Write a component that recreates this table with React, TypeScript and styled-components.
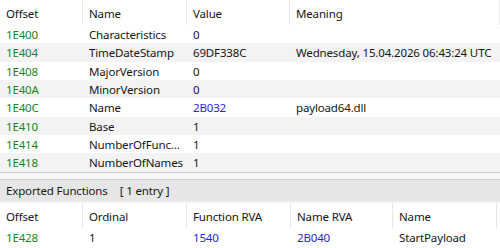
import React from 'react';
import styled, { createGlobalStyle } from 'styled-components';

const GlobalStyle = createGlobalStyle`
  html, body {
    margin: 0;
    padding: 0;
    background: #fff;
  }
  body {
    font-family: "Noto Sans", "Open Sans", sans-serif;
    font-size: 11.5px;
    letter-spacing: -0.15px;
    color: #161616;
  }
`;

type Tone = 'plain' | 'offset' | 'link';

const toneColor: Record<Tone, string> = {
  plain: '#161616',
  offset: '#18861c',
  link: '#2424e6'
};

const Frame = styled.div`
  width: 500px;
  height: 248px;
  overflow: hidden;
  display: flex;
  flex-direction: column;
  background: #fff;
`;

const Grid = styled.div`
  display: flex;
  flex-direction: column;
`;

const HeadRow = styled.div`
  display: flex;
  height: 25px;
  align-items: stretch;
  background: #fff;
`;

const HeadCell = styled.div<{ $w: number }>`
  flex: 0 0 ${(p) => p.$w}px;
  box-sizing: border-box;
  padding: 2px 5px 0 6px;
  display: flex;
  align-items: center;
  border-right: 1px solid #e6e6e6;
  white-space: nowrap;
  overflow: hidden;
`;

const Row = styled.div<{ $alt: boolean }>`
  display: flex;
  height: 18.33px;
  align-items: center;
  padding-top: 1px;
  box-sizing: border-box;
  background: ${(p) => (p.$alt ? '#f3f3f3' : '#fff')};
`;

const Cell = styled.div<{ $w: number; $tone: Tone }>`
  flex: 0 0 ${(p) => p.$w}px;
  box-sizing: border-box;
  padding: 0 4px 0 6px;
  color: ${(p) => toneColor[p.$tone]};
  white-space: nowrap;
  overflow: hidden;
  text-overflow: ellipsis;
`;

const Splitter = styled.div`
  height: 6px;
  border-top: 1px solid #cfcfcf;
  border-bottom: 1px solid #cfcfcf;
  background: #f7f7f7;
`;

const SectionBar = styled.div`
  height: 23px;
  display: flex;
  align-items: center;
  gap: 12px;
  padding: 1px 0 0 6px;
  box-sizing: border-box;
  background: #e6e6e6;
  border-bottom: 2px solid #f2f2f2;
`;

type Column = { title: string; width: number };
type Value = { text: string; tone?: Tone };

const headerCols: Column[] = [
  { title: 'Offset', width: 83 },
  { title: 'Name', width: 104 },
  { title: 'Value', width: 103 },
  { title: 'Meaning', width: 210 }
];

const headerRows: Value[][] = [
  [{ text: '1E400', tone: 'offset' }, { text: 'Characteristics' }, { text: '0' }, { text: '' }],
  [{ text: '1E404', tone: 'offset' }, { text: 'TimeDateStamp' }, { text: '69DF338C' }, { text: 'Wednesday, 15.04.2026 06:43:24 UTC' }],
  [{ text: '1E408', tone: 'offset' }, { text: 'MajorVersion' }, { text: '0' }, { text: '' }],
  [{ text: '1E40A', tone: 'offset' }, { text: 'MinorVersion' }, { text: '0' }, { text: '' }],
  [{ text: '1E40C', tone: 'offset' }, { text: 'Name' }, { text: '2B032', tone: 'link' }, { text: 'payload64.dll' }],
  [{ text: '1E410', tone: 'offset' }, { text: 'Base' }, { text: '1' }, { text: '' }],
  [{ text: '1E414', tone: 'offset' }, { text: 'NumberOfFunctions' }, { text: '1' }, { text: '' }],
  [{ text: '1E418', tone: 'offset' }, { text: 'NumberOfNames' }, { text: '1' }, { text: '' }]
];

const exportCols: Column[] = [
  { title: 'Offset', width: 83 },
  { title: 'Ordinal', width: 104 },
  { title: 'Function RVA', width: 104 },
  { title: 'Name RVA', width: 102 },
  { title: 'Name', width: 104 }
];

const exportRows: Value[][] = [
  [{ text: '1E428', tone: 'offset' }, { text: '1' }, { text: '1540', tone: 'link' }, { text: '2B040', tone: 'link' }, { text: 'StartPayload' }]
];

const DataGrid = ({ columns, rows }: { columns: Column[]; rows: Value[][] }) => (
  <Grid>
    <HeadRow>
      {columns.map((c) => (
        <HeadCell key={c.title} $w={c.width}>{c.title}</HeadCell>
      ))}
    </HeadRow>
    {rows.map((r, i) => (
      <Row key={i} $alt={i % 2 === 1}>
        {r.map((v, j) => (
          <Cell key={j} $w={columns[j].width} $tone={v.tone || 'plain'}>{v.text}</Cell>
        ))}
      </Row>
    ))}
  </Grid>
);

export default function App () {
  return (
    <Frame>
      <GlobalStyle />
      <DataGrid columns={headerCols} rows={headerRows} />
      <Splitter />
      <SectionBar>
        <span>Exported Functions</span>
        <span>[ 1 entry ]</span>
      </SectionBar>
      <DataGrid columns={exportCols} rows={exportRows} />
    </Frame>
  );
}
